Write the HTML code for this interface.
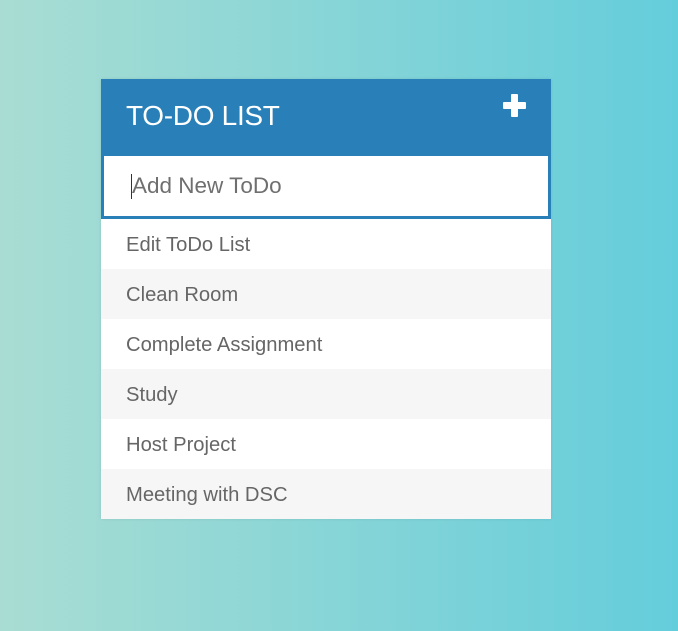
<!DOCTYPE html>
<html><head><style>
html,body{margin:0;padding:0;width:678px;height:631px;overflow:hidden}
body{background:linear-gradient(to right,#a9ddd3,#64cddb);font-family:"Liberation Sans",Arial,sans-serif;position:relative}
.card{position:absolute;left:101px;top:79px;width:450px;background:#fff;box-shadow:0 0 3px rgba(0,0,0,.1)}
.hd{height:77px;background:#2980b9;position:relative}
.hd h1{margin:0;position:absolute;left:25px;top:21px;font-size:28px;font-weight:normal;color:#fff;letter-spacing:-0.3px}
.plus{position:absolute;left:402px;top:15px;width:23px;height:23px}
.plus:before,.plus:after{content:"";position:absolute;background:#fff;border-radius:1px}
.plus:before{left:8px;top:0;width:7px;height:23px}
.plus:after{left:0;top:8px;width:23px;height:7px}
.in{height:60px;border:3px solid #2980b9;border-top:none;position:relative;background:#fff}
.in span{position:absolute;left:28px;top:17px;font-size:22.5px;color:#6f6f6f}
.in i{position:absolute;left:27px;top:18px;width:1px;height:25px;background:#333}
.it{height:50px;line-height:52px;padding-left:25px;font-size:20.2px;color:#666}
</style></head><body>
<div class="card">
<div class="hd"><h1>TO-DO LIST</h1><div class="plus"></div></div>
<div class="in"><i></i><span>Add New ToDo</span></div>
<div class="list">
<div class="it" style="background:#fff">Edit ToDo List</div>
<div class="it" style="background:#f6f6f6">Clean Room</div>
<div class="it" style="background:#fff">Complete Assignment</div>
<div class="it" style="background:#f6f6f6">Study</div>
<div class="it" style="background:#fff">Host Project</div>
<div class="it" style="background:#f6f6f6">Meeting with DSC</div>
</div>
</div>
</body></html>
